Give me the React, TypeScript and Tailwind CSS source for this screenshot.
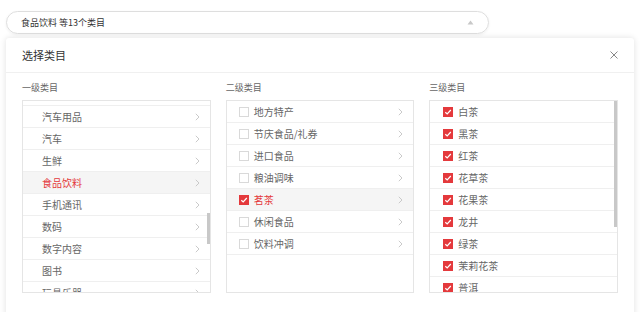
import React from 'react';

const RED = '#e4393c';

const level1 = ['', '汽车用品', '汽车', '生鲜', '食品饮料', '手机通讯', '数码', '数字内容', '图书', '玩具乐器'];
const level2 = ['地方特产', '节庆食品/礼券', '进口食品', '粮油调味', '茗茶', '休闲食品', '饮料冲调'];
const level3 = ['白茶', '黑茶', '红茶', '花草茶', '花果茶', '龙井', '绿茶', '茉莉花茶', '普洱'];

const Chevron = () => (
  <svg width="5" height="8" viewBox="0 0 5 8" className="shrink-0">
    <path d="M0.8 0.8 L4 4 L0.8 7.2" fill="none" stroke="#c4c4c4" strokeWidth="0.9" />
  </svg>
);

const Checkbox = ({ checked }: { checked: boolean }) =>
  checked ? (
    <span className="w-[10px] h-[10px] shrink-0 flex items-center justify-center" style={{ background: RED }}>
      <svg width="8" height="8" viewBox="0 0 8 8">
        <path d="M1.3 4.2 L3.2 6 L6.8 2" fill="none" stroke="#fff" strokeWidth="1.2" />
      </svg>
    </span>
  ) : (
    <span className="w-[10px] h-[10px] shrink-0 border border-[#d9d9d9] bg-white" />
  );

export default function App() {
  return (
    <div className="w-[640px] h-[312px] overflow-hidden bg-white pt-[11px]" style={{ fontFamily: '"Noto Sans CJK SC", "Noto Sans", sans-serif' }}>
      <div className="ml-[6px] w-[483px] h-[23px] rounded-full border border-[#dedede] flex items-center pl-[14px] pr-[14px] justify-between shadow-[0_1px_3px_rgba(0,0,0,0.06)]">
        <span className="text-[9px] text-[#333] leading-none">食品饮料 等13个类目</span>
        <svg width="7" height="5" viewBox="0 0 7 5">
          <path d="M3.5 0.5 L6.5 4.5 L0.5 4.5 Z" fill="#c8c8c8" />
        </svg>
      </div>

      <div className="mt-[4px] ml-[6px] w-[628px] h-[300px] bg-white shadow-[0_0_6px_rgba(0,0,0,0.12)] rounded-[3px]">
        <div className="h-[35px] flex items-center justify-between px-[16px] border-b border-[#f0f0f0]">
          <span className="text-[11px] text-[#333]">选择类目</span>
          <svg width="8" height="8" viewBox="0 0 8 8">
            <path d="M0.5 0.5 L7.5 7.5 M7.5 0.5 L0.5 7.5" stroke="#888" strokeWidth="1" />
          </svg>
        </div>

        <div className="flex gap-[15px] px-[16px] pt-[9px]">
          {/* level 1 */}
          <div className="w-[189px]">
            <div className="text-[9px] text-[#666] h-[12px] leading-[12px] mb-[6px]">一级类目</div>
            <div className="relative h-[193px] border border-[#e5e5e5] overflow-hidden">
              <div className="-mt-[17px]">
                {level1.map((name, i) => {
                  const active = name === '食品饮料';
                  return (
                    <div
                      key={i}
                      className={`h-[22px] flex items-center justify-between pl-[19px] pr-[10px] border-b border-[#efefef] ${active ? 'bg-[#f5f5f5]' : ''}`}
                    >
                      <span className="text-[10px]" style={{ color: active ? RED : '#666' }}>{name}</span>
                      {name && <Chevron />}
                    </div>
                  );
                })}
              </div>
              <div className="absolute right-0 top-[112px] w-[3px] h-[31px] bg-[#c8c8c8]" />
            </div>
          </div>

          {/* level 2 */}
          <div className="w-[189px]">
            <div className="text-[9px] text-[#666] h-[12px] leading-[12px] mb-[6px]">二级类目</div>
            <div className="h-[193px] border border-[#e5e5e5] overflow-hidden">
              {level2.map(name => {
                const active = name === '茗茶';
                return (
                  <div
                    key={name}
                    className={`h-[22px] flex items-center pl-[12px] pr-[10px] border-b border-[#efefef] ${active ? 'bg-[#f5f5f5]' : ''}`}
                  >
                    <Checkbox checked={active} />
                    <span className="ml-[5px] flex-1 text-[10px]" style={{ color: active ? RED : '#666' }}>{name}</span>
                    <Chevron />
                  </div>
                );
              })}
            </div>
          </div>

          {/* level 3 */}
          <div className="w-[189px]">
            <div className="text-[9px] text-[#666] h-[12px] leading-[12px] mb-[6px]">三级类目</div>
            <div className="relative h-[193px] border border-[#e5e5e5] overflow-hidden">
              {level3.map(name => (
                <div key={name} className="h-[22px] flex items-center pl-[13px] border-b border-[#efefef]">
                  <Checkbox checked />
                  <span className="ml-[5px] text-[10px] text-[#666]">{name}</span>
                </div>
              ))}
              <div className="absolute right-0 top-0 w-[3px] h-[126px] bg-[#c8c8c8]" />
            </div>
          </div>
        </div>
      </div>
    </div>
  );
}
